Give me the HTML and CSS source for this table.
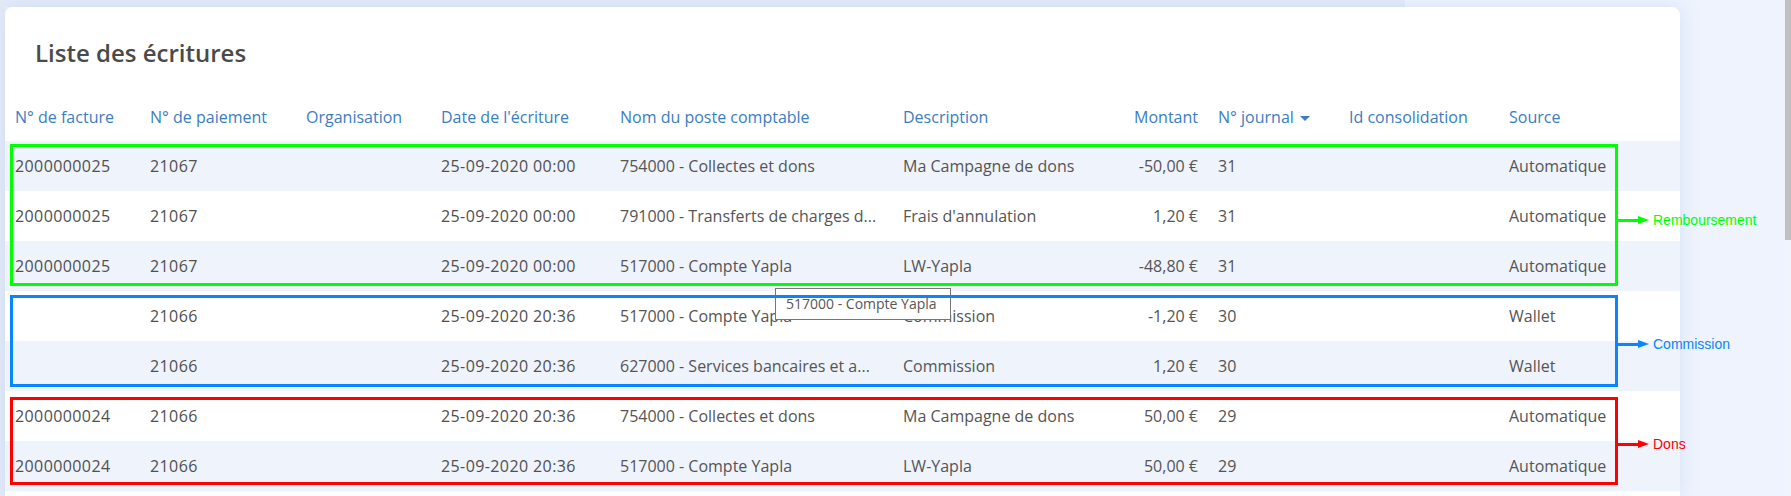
FILE: index.html
```html
<!DOCTYPE html>
<html lang="fr">
<head>
<meta charset="utf-8">
<title>Liste des écritures</title>
<link rel="stylesheet" href="styles.css">
</head>
<body>
<div class="page">
  <main class="main">
    <section class="card">
      <h1 class="card-title">Liste des écritures</h1>
      <table class="grid">
        <colgroup>
          <col class="c-fact"><col class="c-paie"><col class="c-org"><col class="c-date"><col class="c-nom">
          <col class="c-desc"><col class="c-mont"><col class="c-jour"><col class="c-cons"><col class="c-src">
        </colgroup>
        <thead>
          <tr>
            <th>N° de facture</th>
            <th>N° de paiement</th>
            <th>Organisation</th>
            <th>Date de l'écriture</th>
            <th>Nom du poste comptable</th>
            <th>Description</th>
            <th class="num">Montant</th>
            <th>N° journal<span class="caret"></span></th>
            <th>Id consolidation</th>
            <th>Source</th>
          </tr>
        </thead>
        <tbody>
          <tr>
            <td class="sys">2000000025</td><td class="sys">21067</td><td></td><td class="sys">25-09-2020 00:00</td>
            <td>754000 - Collectes et dons</td><td>Ma Campagne de dons</td><td class="num">-50,00 €</td>
            <td>31</td><td></td><td>Automatique</td>
          </tr>
          <tr>
            <td class="sys">2000000025</td><td class="sys">21067</td><td></td><td class="sys">25-09-2020 00:00</td>
            <td>791000 - Transferts de charges d...</td><td>Frais d'annulation</td><td class="num">1,20 €</td>
            <td>31</td><td></td><td>Automatique</td>
          </tr>
          <tr>
            <td class="sys">2000000025</td><td class="sys">21067</td><td></td><td class="sys">25-09-2020 00:00</td>
            <td>517000 - Compte Yapla</td><td>LW-Yapla</td><td class="num">-48,80 €</td>
            <td>31</td><td></td><td>Automatique</td>
          </tr>
          <tr>
            <td class="sys"></td><td class="sys">21066</td><td></td><td class="sys">25-09-2020 20:36</td>
            <td>517000 - Compte Yapla</td><td>Commission</td><td class="num">-1,20 €</td>
            <td>30</td><td></td><td>Wallet</td>
          </tr>
          <tr>
            <td class="sys"></td><td class="sys">21066</td><td></td><td class="sys">25-09-2020 20:36</td>
            <td>627000 - Services bancaires et a...</td><td>Commission</td><td class="num">1,20 €</td>
            <td>30</td><td></td><td>Wallet</td>
          </tr>
          <tr>
            <td class="sys">2000000024</td><td class="sys">21066</td><td></td><td class="sys">25-09-2020 20:36</td>
            <td>754000 - Collectes et dons</td><td>Ma Campagne de dons</td><td class="num">50,00 €</td>
            <td>29</td><td></td><td>Automatique</td>
          </tr>
          <tr>
            <td class="sys">2000000024</td><td class="sys">21066</td><td></td><td class="sys">25-09-2020 20:36</td>
            <td>517000 - Compte Yapla</td><td>LW-Yapla</td><td class="num">50,00 €</td>
            <td>29</td><td></td><td>Automatique</td>
          </tr>
          <tr>
            <td></td><td></td><td></td><td></td><td></td><td></td><td></td><td></td><td></td><td></td>
          </tr>
        </tbody>
      </table>
    </section>

    <div class="tooltip">517000 - Compte Yapla</div>

    <div class="ann-box ann-green"></div>
    <div class="ann-box ann-blue"></div>
    <div class="ann-box ann-red"></div>

    <div class="ann-arrow ann-green-arrow"><span class="ann-line"></span><span class="ann-head"></span><span class="ann-label">Remboursement</span></div>
    <div class="ann-arrow ann-blue-arrow"><span class="ann-line"></span><span class="ann-head"></span><span class="ann-label">Commission</span></div>
    <div class="ann-arrow ann-red-arrow"><span class="ann-line"></span><span class="ann-head"></span><span class="ann-label">Dons</span></div>
  </main>
  <div class="scrollbar"><div class="thumb"></div></div>
</div>
</body>
</html>
```
FILE: styles.css
```css
* { box-sizing: border-box; }

html, body {
  margin: 0;
  padding: 0;
  width: 1791px;
  height: 496px;
  overflow: hidden;
}

body {
  font-family: "Open Sans", "Liberation Sans", sans-serif;
  background: #eef3fd;
  color: #555555;
}

.page {
  display: flex;
  height: 496px;
}

.main {
  position: relative;
  flex: 1;
  height: 496px;
  overflow: hidden;
  padding: 7px 0 0 5px;
  background:
    linear-gradient(#e4ebf8, #e4ebf8) left top / 1405px 7px no-repeat,
    linear-gradient(#e4ebf8, #e4ebf8) left top / 5px 100% no-repeat,
    #eef3fd;
}

.card {
  width: 1675px;
  height: 489px;
  overflow: hidden;
  background: #ffffff;
  border-radius: 8px 8px 0 0;
  box-shadow: 0 0 18px rgba(170, 190, 235, 0.35);
}

.card-title {
  margin: 0;
  padding: 31px 0 25px 30px;
  font-size: 24px;
  line-height: 30px;
  font-weight: 600;
  color: #4a4a4a;
}

.grid {
  width: 1675px;
  table-layout: fixed;
  border-collapse: collapse;
  font-size: 16px;
}

.c-fact { width: 135px; }
.c-paie { width: 156px; }
.c-org  { width: 135px; }
.c-date { width: 179px; }
.c-nom  { width: 283px; }
.c-desc { width: 197px; }
.c-mont { width: 118px; }
.c-jour { width: 131px; }
.c-cons { width: 160px; }
.c-src  { width: 181px; }

.grid th {
  height: 48px;
  padding: 0 10px;
  text-align: left;
  font-weight: 400;
  color: #3b7dc2;
  white-space: nowrap;
  vertical-align: middle;
}

.grid td {
  height: 50px;
  padding: 0 10px;
  color: #555555;
  white-space: nowrap;
  overflow: hidden;
  vertical-align: middle;
}

.grid td.sys { letter-spacing: 0.4px; color: #505050; }

.grid .num { text-align: right; }

.grid tbody tr:nth-child(odd) { background: #eef3fc; }
.grid tbody tr:nth-child(even) { background: #ffffff; }

.caret {
  display: inline-block;
  width: 0;
  height: 0;
  margin-left: 6px;
  vertical-align: middle;
  border-top: 5px solid #3b7dc2;
  border-left: 5px solid transparent;
  border-right: 5px solid transparent;
}

.scrollbar {
  width: 6px;
  height: 496px;
  background: #f0f4fd;
}

.thumb {
  height: 240px;
  background: #c1c1c1;
}

/* hover tooltip */
.tooltip {
  position: absolute;
  left: 775px;
  top: 288px;
  width: 176px;
  height: 32px;
  padding: 0 0 0 10px;
  background: #ffffff;
  border: 1px solid #767676;
  font-family: "Open Sans", "Liberation Sans", sans-serif;
  font-size: 14px;
  line-height: 30px;
  color: #575757;
  white-space: nowrap;
}

/* annotation overlays */
.ann-box {
  position: absolute;
  left: 10px;
  width: 1608px;
  border: 3px solid;
}
.ann-green { top: 144px; height: 142px; border-color: #00ff00; }
.ann-blue  { top: 295px; height: 92px;  border-color: #0a84ff; }
.ann-red   { top: 397px; height: 88px;  border-color: #ff0000; }

.ann-arrow {
  position: absolute;
  left: 1618px;
  height: 16px;
  display: flex;
  align-items: center;
  font-family: "Liberation Sans", Arial, sans-serif;
  font-size: 14px;
}
.ann-line { width: 20px; height: 3px; background: currentColor; }
.ann-head {
  width: 0;
  height: 0;
  border-left: 11px solid currentColor;
  border-top: 4px solid transparent;
  border-bottom: 4px solid transparent;
}
.ann-label { margin-left: 4px; line-height: 16px; }

.ann-green-arrow { top: 212px; color: #00ff00; }
.ann-blue-arrow  { top: 336px; color: #0a84ff; }
.ann-red-arrow   { top: 436px; color: #ff0000; }
```
